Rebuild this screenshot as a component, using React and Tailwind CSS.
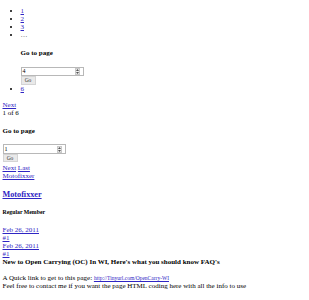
import React from "react";

const linkCls = "text-[#2f25c4] underline";

const PageInput = ({ value }) => (
    <div className="flex h-[9.5px] w-[63px] items-center justify-between border border-[#b8b8b8] bg-white pl-[1px] pr-[3px]">
        <span className="text-[6px] leading-[7px]">{value}</span>
        <div className="flex h-[7px] w-[5px] flex-col items-center justify-center gap-[1px] bg-[#ececec] border border-[#c8c8c8]">
            <svg width="3" height="2" viewBox="0 0 3 2"><path d="M0 2 L1.5 0 L3 2 Z" fill="#555" /></svg>
            <svg width="3" height="2" viewBox="0 0 3 2"><path d="M0 0 L1.5 2 L3 0 Z" fill="#555" /></svg>
        </div>
    </div>
);

const GoButton = () => (
    <div className="flex h-[8.5px] w-[15px] items-center justify-center border border-[#d4d4d4] bg-[#e9e9e9] text-[5.5px] leading-[6px] text-[#333]">
        Go
    </div>
);

export default function App() {
    return (
        <div className="h-[300px] w-[309px] overflow-hidden bg-white px-[2.5px] pt-[6.5px] font-['Liberation_Serif',serif] text-[7px] leading-[8px] text-black">
            {/* page list */}
            <ul className="list-disc pl-[18px]">
                <li><a className={linkCls}>1</a></li>
                <li><a className={linkCls}>2</a></li>
                <li><a className={linkCls}>3</a></li>
                <li>
                    <span className="text-[#555]">…</span>
                    <h4 className="mt-[10.5px] mb-[9.5px] font-bold">Go to page</h4>
                    <PageInput value="4" />
                    <GoButton />
                </li>
                <li className="mt-[0.5px]"><a className={linkCls}>6</a></li>
            </ul>

            <div className="mt-[8px]"><a className={linkCls}>Next</a></div>
            <div>1 of 6</div>

            <h4 className="mt-[9.6px] mb-[9.7px] font-bold">Go to page</h4>
            <PageInput value="1" />
            <GoButton />
            <div className="mt-[2px]">
                <a className={linkCls}>Next</a> <a className={linkCls}>Last</a>
            </div>
            <div><a className={linkCls}>Motofixxer</a></div>

            {/* post header */}
            <h3 className="mt-[9.5px] text-[8.2px] leading-[9.4px] font-bold">
                <a className={linkCls}>Motofixxer</a>
            </h3>
            <h5 className="mt-[10px] text-[5.8px] leading-[6.7px] font-bold">Regular Member</h5>

            <div className="mt-[9.7px]"><a className={linkCls}>Feb 26, 2011</a></div>
            <div><a className={linkCls}>#1</a></div>
            <div><a className={linkCls}>Feb 26, 2011</a></div>
            <div><a className={linkCls}>#1</a></div>
            <div className="font-bold">New to Open Carrying (OC) In WI, Here's what you should know FAQ's</div>

            <p className="mt-[8.3px]">
                A Quick link to get to this page: <a className={`${linkCls} text-[5.5px]`}>http://Tinyurl.com/OpenCarry-WI</a>
                <br />
                Feel free to contact me if you want the page HTML coding here with all the info to use
            </p>
        </div>
    );
}
